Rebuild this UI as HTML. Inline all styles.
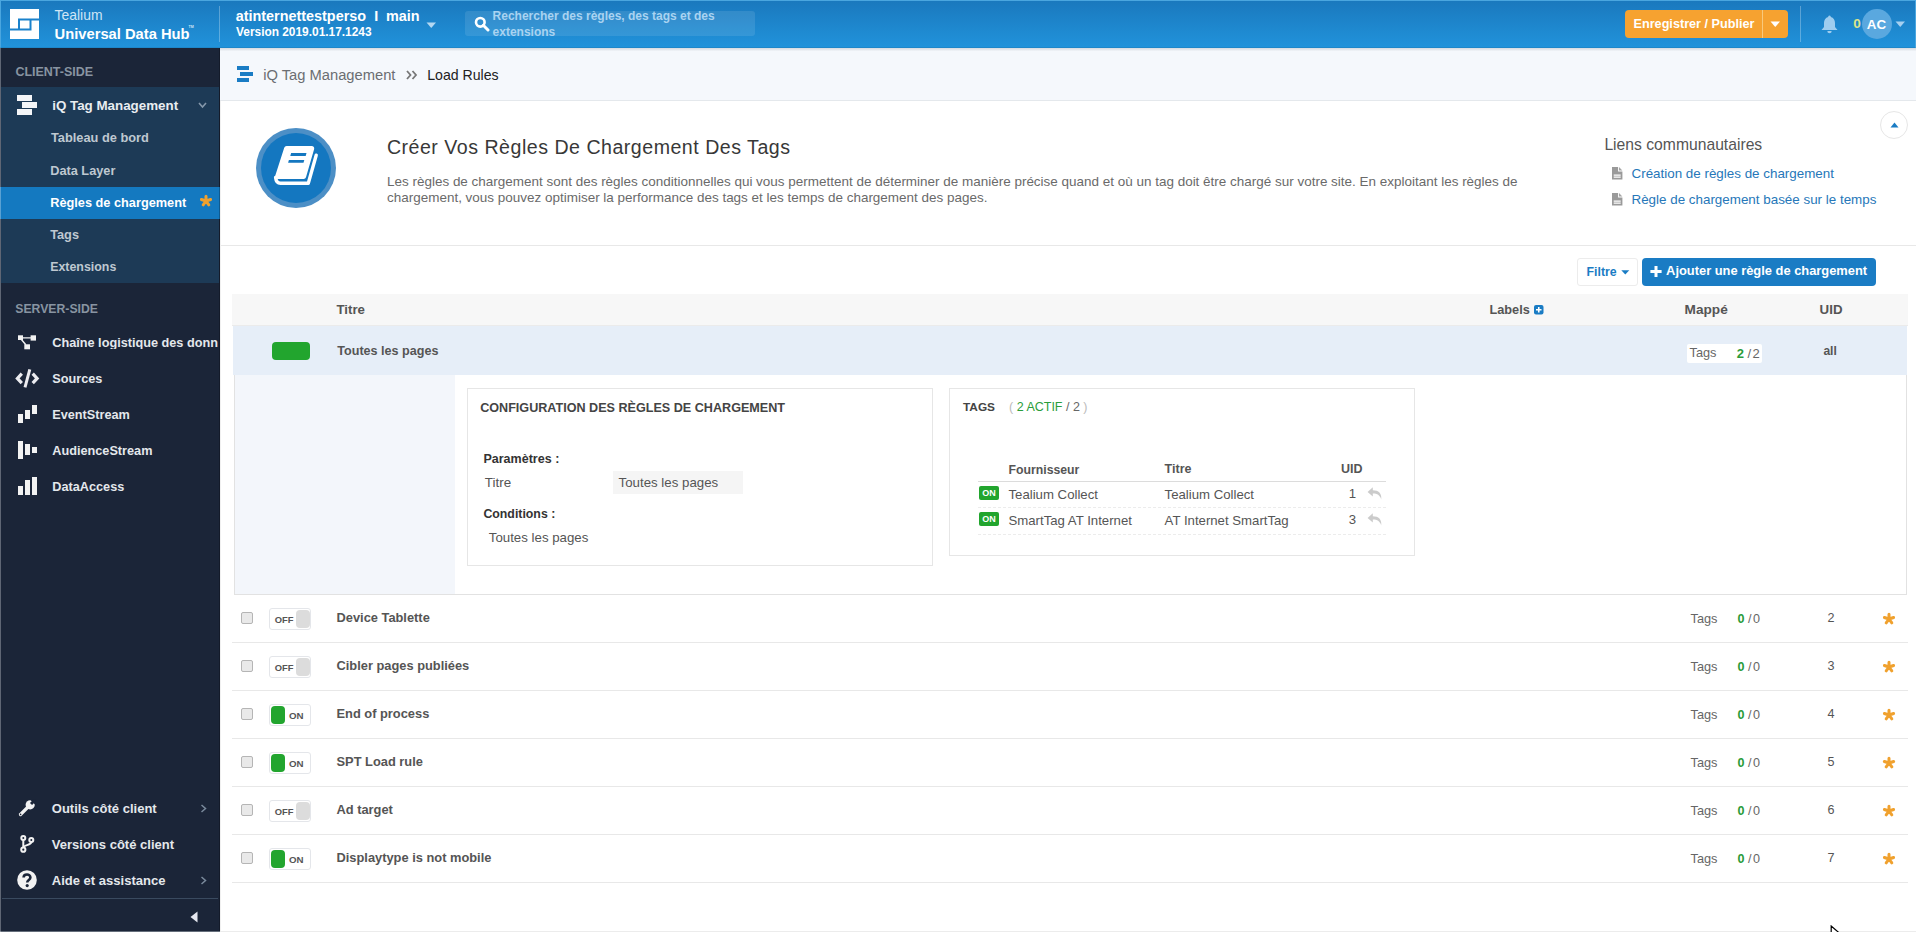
<!DOCTYPE html>
<html><head><meta charset="utf-8"><style>
html,body{margin:0;padding:0;}
body{width:1916px;height:932px;position:relative;overflow:hidden;background:#fff;font-family:"Liberation Sans",sans-serif;}
body>div,body>svg{position:absolute;}
.t{white-space:nowrap;line-height:1;}
</style></head><body>
<div style="left:0px;top:0px;width:1916px;height:48px;background:linear-gradient(#1a78bd,#2193db);"></div>
<div style="left:0px;top:0px;width:1916px;height:1px;background:#4aa6df;"></div>
<div style="left:0px;top:0px;width:1px;height:48px;background:#4aa6df;"></div>
<div style="left:1915px;top:0px;width:1px;height:48px;background:#4aa6df;"></div>
<div style="left:0px;top:47px;width:1916px;height:1px;background:rgba(0,0,0,0.08);"></div>
<svg style="position:absolute;left:10px;top:9px" width="30" height="31" viewBox="0 0 30 31"><rect x="0" y="0" width="29" height="30" fill="#fff"/><path d="M8 10.5 H29 M9 9.5 V20 M0 20.5 H21.5 M20.5 11 V21" stroke="#1a82cc" stroke-width="2" fill="none"/></svg>
<div class="t" style="left:54.6px;top:8.53px;font-size:13.9px;color:#cfe6f6;font-weight:normal;">Tealium</div>
<div class="t" style="left:54.6px;top:26.84px;font-size:14.72px;color:#fff;font-weight:bold;">Universal Data Hub</div>
<div class="t" style="left:188.6px;top:26.05px;font-size:3.6px;color:#cfe6f6;font-weight:bold;">TM</div>
<div style="left:219px;top:6px;width:1px;height:36px;background:rgba(255,255,255,0.28);"></div>
<div class="t" style="left:235.7px;top:9.01px;font-size:14.4px;color:#fff;font-weight:bold;">atinternettestperso</div>
<div class="t" style="left:374.2px;top:9.01px;font-size:14.4px;color:#fff;font-weight:bold;">I</div>
<div class="t" style="left:386px;top:9.01px;font-size:14.4px;color:#fff;font-weight:bold;">main</div>
<div class="t" style="left:236px;top:27.03px;font-size:11.9px;color:#fff;font-weight:bold;">Version 2019.01.17.1243</div>
<svg style="position:absolute;left:426px;top:22px" width="11" height="7"><path d="M0.5 0.5 L10 0.5 L5.25 6 Z" fill="#b3d8f2"/></svg>
<div style="left:465px;top:11px;width:290px;height:25px;background:rgba(255,255,255,0.10);border-radius:3px;"></div>
<svg style="position:absolute;left:474px;top:16px" width="16" height="16" viewBox="0 0 16 16"><circle cx="6.3" cy="6.3" r="4.3" stroke="#fff" stroke-width="2.6" fill="none"/><path d="M9.3 9.3 L14 14" stroke="#fff" stroke-width="3" stroke-linecap="round"/></svg>
<div class="t" style="left:492.6px;top:10.34px;font-size:12px;color:#a9d3f1;font-weight:bold;">Rechercher des règles, des tags et des</div>
<div class="t" style="left:492.6px;top:25.74px;font-size:12px;color:#a9d3f1;font-weight:bold;">extensions</div>
<div style="left:1625px;top:10px;width:163px;height:28px;background:#f6a230;border-radius:4px;"></div>
<div style="left:1762px;top:10px;width:1px;height:28px;background:#f9c97c;"></div>
<div class="t" style="left:1633.5px;top:17.78px;font-size:12.66px;color:#fff;font-weight:bold;">Enregistrer / Publier</div>
<svg style="position:absolute;left:1770px;top:21px" width="11" height="7"><path d="M0.5 0.5 L10 0.5 L5.25 6 Z" fill="#fff"/></svg>
<div style="left:1800px;top:6px;width:1px;height:36px;background:rgba(255,255,255,0.28);"></div>
<svg style="position:absolute;left:1820px;top:15px" width="19" height="19" viewBox="0 0 19 19"><path d="M9.5 0.5 C10.5 0.5 10.8 1.3 10.8 2 C13.6 2.7 15 5 15 8 L15 12 L17.5 15 L1.5 15 L4 12 L4 8 C4 5 5.4 2.7 8.2 2 C8.2 1.3 8.5 0.5 9.5 0.5 Z" fill="#9fcdef"/><path d="M7.3 16 A2.2 2.2 0 0 0 11.7 16 Z" fill="#9fcdef"/></svg>
<div class="t" style="left:1853.2px;top:16.99px;font-size:13.6px;color:#dbe48a;font-weight:bold;">0</div>
<div style="left:1862px;top:9px;width:30px;height:30px;border-radius:50%;background:#5aa8df;"></div>
<div class="t" style="left:1866.8px;top:17.76px;font-size:13.4px;color:#fff;font-weight:bold;">AC</div>
<svg style="position:absolute;left:1895px;top:21px" width="11" height="7"><path d="M0.5 0.5 L10 0.5 L5.25 6 Z" fill="#a6d0f0"/></svg>
<div style="left:0px;top:48px;width:220px;height:884px;background:#1b2538;"></div>
<div class="t" style="left:15.4px;top:66.14px;font-size:12.47px;color:#8894a1;font-weight:bold;">CLIENT-SIDE</div>
<div style="left:1px;top:87px;width:218px;height:196px;background:#1d3a56;"></div>
<div style="left:17px;top:95.2px;width:15px;height:5.6px;background:#f4f6f8;"></div>
<div style="left:22px;top:102px;width:14.6px;height:5.9px;background:#f4f6f8;"></div>
<div style="left:17px;top:109.2px;width:15px;height:5.6px;background:#f4f6f8;"></div>
<div class="t" style="left:52.2px;top:99.38px;font-size:13.37px;color:#e9edf1;font-weight:bold;">iQ Tag Management</div>
<svg style="position:absolute;left:198px;top:102px" width="10" height="7"><path d="M1 1 L4.5 5 L8 1" stroke="#8597aa" stroke-width="1.6" fill="none"/></svg>
<div style="left:0px;top:187px;width:220px;height:32px;background:#1479c0;"></div>
<div class="t" style="left:51px;top:132.46px;font-size:12.8px;color:#bfc8d1;font-weight:bold;">Tableau de bord</div>
<div class="t" style="left:50.2px;top:165.01px;font-size:12.75px;color:#bfc8d1;font-weight:bold;">Data Layer</div>
<div class="t" style="left:50.2px;top:196.91px;font-size:12.75px;color:#ffffff;font-weight:bold;">Règles de chargement</div>
<div class="t" style="left:50.2px;top:228.61px;font-size:12.75px;color:#bfc8d1;font-weight:bold;">Tags</div>
<div class="t" style="left:50.2px;top:260.80px;font-size:12.4px;color:#bfc8d1;font-weight:bold;">Extensions</div>
<svg style="position:absolute;left:199px;top:194px" width="14" height="14" viewBox="0 0 14 14"><g stroke="#f0a12e" stroke-width="3" stroke-linecap="round"><path d="M7 7 L7 2.2 M7 7 L11.6 5.5 M7 7 L9.8 10.9 M7 7 L4.2 10.9 M7 7 L2.4 5.5"/></g></svg>
<div class="t" style="left:15.3px;top:303.35px;font-size:12.23px;color:#8894a1;font-weight:bold;">SERVER-SIDE</div>
<div class="t" style="left:52.3px;top:336.55px;font-size:12.7px;color:#e4e8ec;font-weight:bold;width:166px;overflow:hidden;">Chaîne logistique des données</div>
<div class="t" style="left:52.3px;top:372.55px;font-size:12.7px;color:#e4e8ec;font-weight:bold;width:166px;overflow:hidden;">Sources</div>
<div class="t" style="left:52.3px;top:408.55px;font-size:12.7px;color:#e4e8ec;font-weight:bold;width:166px;overflow:hidden;">EventStream</div>
<div class="t" style="left:52.3px;top:444.65px;font-size:12.7px;color:#e4e8ec;font-weight:bold;width:166px;overflow:hidden;">AudienceStream</div>
<div class="t" style="left:52.3px;top:480.65px;font-size:12.7px;color:#e4e8ec;font-weight:bold;width:166px;overflow:hidden;">DataAccess</div>
<svg style="position:absolute;left:17px;top:334px" width="21" height="17" viewBox="0 0 21 17"><rect x="1" y="1.3" width="5" height="4.7" fill="#f2f2f2"/><rect x="13.6" y="1.3" width="5.4" height="5.3" fill="#f2f2f2"/><rect x="7.3" y="10.3" width="5.7" height="5" fill="#f2f2f2"/><path d="M5 3.9 H14 M4.2 5.2 L8.8 10.8" stroke="#f2f2f2" stroke-width="1.4"/></svg>
<svg style="position:absolute;left:15px;top:369px" width="25" height="19" viewBox="0 0 25 19"><path d="M6.8 4.6 L2.4 9.4 L6.8 14.2 M17.7 4.6 L22.1 9.4 L17.7 14.2" stroke="#ececf0" stroke-width="3.2" fill="none"/><path d="M14.8 0.4 L10 18.3" stroke="#ececf0" stroke-width="3"/></svg>
<div style="left:18px;top:414px;width:4.5px;height:9px;background:#f2f2f2;"></div>
<div style="left:25px;top:409.5px;width:5px;height:9px;background:#f2f2f2;"></div>
<div style="left:31.5px;top:405px;width:5px;height:9px;background:#f2f2f2;"></div>
<div style="left:17.6px;top:441px;width:5px;height:18px;background:#f2f2f2;"></div>
<div style="left:24.8px;top:444.3px;width:5px;height:11.2px;background:#f2f2f2;"></div>
<div style="left:31.5px;top:446.5px;width:5px;height:6.8px;background:#f2f2f2;"></div>
<div style="left:18px;top:486px;width:4.5px;height:9px;background:#f2f2f2;"></div>
<div style="left:24.8px;top:480.3px;width:5px;height:14.7px;background:#f2f2f2;"></div>
<div style="left:31.5px;top:476.5px;width:5px;height:18.5px;background:#f2f2f2;"></div>
<div class="t" style="left:51.8px;top:802.27px;font-size:13.03px;color:#e4e8ec;font-weight:bold;">Outils côté client</div>
<svg style="position:absolute;left:200px;top:803.8px" width="8" height="10"><path d="M1.5 1 L5.5 4.5 L1.5 8" stroke="#7a8a9c" stroke-width="1.5" fill="none"/></svg>
<div class="t" style="left:51.8px;top:838.07px;font-size:13.03px;color:#e4e8ec;font-weight:bold;">Versions côté client</div>
<div class="t" style="left:51.8px;top:874.17px;font-size:13.03px;color:#e4e8ec;font-weight:bold;">Aide et assistance</div>
<svg style="position:absolute;left:200px;top:875.7px" width="8" height="10"><path d="M1.5 1 L5.5 4.5 L1.5 8" stroke="#7a8a9c" stroke-width="1.5" fill="none"/></svg>
<svg style="position:absolute;left:18px;top:799px" width="18" height="18" viewBox="0 0 18 18"><path d="M2.5 15.5 L10 8" stroke="#f2f2f2" stroke-width="3.2" stroke-linecap="round"/><circle cx="12.2" cy="5.8" r="4.6" fill="#f2f2f2"/><path d="M12.5 1 L17.5 1 L17.5 6 Z" fill="#1b2538"/><path d="M13 5 L17.4 0.6" stroke="#1b2538" stroke-width="3"/><circle cx="2.6" cy="15.4" r="0.8" fill="#1b2538"/></svg>
<svg style="position:absolute;left:19px;top:834px" width="16" height="20" viewBox="0 0 16 20"><g stroke="#f2f2f2" stroke-width="2" fill="none"><circle cx="4.3" cy="3.9" r="2"/><circle cx="4.3" cy="15.7" r="2.1"/><circle cx="12.3" cy="6" r="2"/><path d="M4.3 5.9 V13.6"/><path d="M12.3 8 C12.3 11.5 4.5 10.8 4.4 13.6"/></g></svg>
<svg style="position:absolute;left:17px;top:870px" width="20" height="20" viewBox="0 0 20 20"><circle cx="10" cy="10" r="9.8" fill="#f2f2f2"/><path d="M6.6 7.6 C6.6 3.6 13.4 3.6 13.4 7.4 C13.4 9.8 10.2 10 10.2 12.4" stroke="#1b2538" stroke-width="2.6" fill="none"/><circle cx="10.2" cy="15.6" r="1.6" fill="#1b2538"/></svg>
<div style="left:2px;top:898px;width:216px;height:1px;background:#3a4a5f;"></div>
<svg style="position:absolute;left:190px;top:911px" width="8" height="12"><path d="M7.5 0.5 L7.5 11.5 L0.5 6 Z" fill="#e6e8f0"/></svg>
<div style="left:0px;top:931px;width:220px;height:1px;background:#656e7b;"></div>
<div style="left:219px;top:48px;width:1px;height:883px;background:rgba(0,0,0,0.25);"></div>
<div style="left:0px;top:48px;width:1px;height:884px;background:rgba(255,255,255,0.3);"></div>
<div style="left:220px;top:48px;width:1696px;height:52px;background:#f5f8fc;"></div>
<div style="left:220px;top:100px;width:1696px;height:1px;background:#e4e8ec;"></div>
<div style="left:220px;top:48px;width:1696px;height:3px;background:linear-gradient(rgba(60,70,85,0.17),rgba(60,70,85,0.02));"></div>
<div style="left:237px;top:66px;width:12px;height:4.2px;background:#1a7cc4;"></div>
<div style="left:240px;top:72px;width:13px;height:4.2px;background:#1a7cc4;"></div>
<div style="left:237px;top:77.6px;width:12px;height:4.2px;background:#1a7cc4;"></div>
<div class="t" style="left:263.2px;top:67.83px;font-size:14.73px;color:#6b6e72;font-weight:normal;">iQ Tag Management</div>
<svg style="position:absolute;left:406px;top:70px" width="12" height="10" viewBox="0 0 12 10"><path d="M1 1 L4.5 5 L1 9 M6.5 1 L10 5 L6.5 9" stroke="#777" stroke-width="1.8" fill="none"/></svg>
<div class="t" style="left:427.2px;top:68.34px;font-size:14.13px;color:#222;font-weight:normal;">Load Rules</div>
<div style="left:220px;top:245px;width:1696px;height:1px;background:#e8e8e8;"></div>
<div style="left:220px;top:101px;width:1px;height:830px;background:#f0f0f0;"></div>
<div style="left:256px;top:128px;width:80px;height:80px;border-radius:50%;background:#4c8fc6;"></div>
<div style="left:261px;top:133px;width:70px;height:70px;border-radius:50%;background:#1477c0;"></div>
<svg style="position:absolute;left:268px;top:140px" width="56" height="52" viewBox="0 0 56 52"><path d="M18.6 8.6 L43.7 8.6 L35.6 36.5 L9.6 36.5 Z" fill="#fff" stroke="#fff" stroke-width="5" stroke-linejoin="round"/><path d="M7.6 37.5 Q8.2 43.3 12.5 43.3 L40.3 43.3 L48.2 15.2" fill="none" stroke="#fff" stroke-width="3.4" stroke-linejoin="round" stroke-linecap="round"/><path d="M23.1 13.1 L38.5 13.1 L37.7 15.9 L22.3 15.9 Z M20.9 20.1 L36.3 20.1 L35.5 22.8 L20.1 22.8 Z" fill="#1477c0"/></svg>
<div class="t" style="left:386.9px;top:138.11px;font-size:19.6px;color:#383838;font-weight:normal;letter-spacing:0.5px;">Créer Vos Règles De Chargement Des Tags</div>
<div class="t" style="left:387px;top:174.90px;font-size:13.47px;color:#6a6a6a;font-weight:normal;">Les règles de chargement sont des règles conditionnelles qui vous permettent de déterminer de manière précise quand et où un tag doit être chargé sur votre site. En exploitant les règles de</div>
<div class="t" style="left:387px;top:190.80px;font-size:13.47px;color:#6a6a6a;font-weight:normal;">chargement, vous pouvez optimiser la performance des tags et les temps de chargement des pages.</div>
<div class="t" style="left:1604.4px;top:136.51px;font-size:15.7px;color:#555;font-weight:normal;">Liens communautaires</div>
<svg style="position:absolute;left:1612px;top:167.29999999999998px" width="11" height="13" viewBox="0 0 11 13"><path d="M0 0 H6.1 V4.5 H10.4 V12.5 H0 Z" fill="#9a9a9a"/><path d="M7 0 L10.4 3.6 L7 3.6 Z" fill="#a5a5a5"/><path d="M1.7 8.2 H8.7 M1.7 10.2 H8.7" stroke="#fff" stroke-width="1.3"/></svg>
<div class="t" style="left:1631.5px;top:166.86px;font-size:13.4px;color:#2677b9;font-weight:normal;">Création de règles de chargement</div>
<svg style="position:absolute;left:1612px;top:193.2px" width="11" height="13" viewBox="0 0 11 13"><path d="M0 0 H6.1 V4.5 H10.4 V12.5 H0 Z" fill="#9a9a9a"/><path d="M7 0 L10.4 3.6 L7 3.6 Z" fill="#a5a5a5"/><path d="M1.7 8.2 H8.7 M1.7 10.2 H8.7" stroke="#fff" stroke-width="1.3"/></svg>
<div class="t" style="left:1631.5px;top:192.76px;font-size:13.4px;color:#2677b9;font-weight:normal;">Règle de chargement basée sur le temps</div>
<div style="left:1880px;top:111px;width:26px;height:26px;border-radius:50%;border:1px solid #e6e6e6;background:#fff;"></div>
<svg style="position:absolute;left:1890px;top:122px" width="9" height="6"><path d="M0.5 5.5 L8.5 5.5 L4.5 0.5 Z" fill="#1a7cc4"/></svg>
<div style="left:1577px;top:258px;width:59px;height:26px;border:1px solid #ececec;border-radius:3px;background:#fff;"></div>
<div class="t" style="left:1586.6px;top:265.78px;font-size:12.31px;color:#1a7cc4;font-weight:bold;">Filtre</div>
<svg style="position:absolute;left:1620.5px;top:269.8px" width="10" height="6"><path d="M0.3 0.3 L8.3 0.3 L4.3 4.6 Z" fill="#1a7cc4"/></svg>
<div style="left:1642px;top:258px;width:234px;height:28px;background:#1a7cc4;border-radius:4px;"></div>
<svg style="position:absolute;left:1650px;top:266px" width="12" height="12"><path d="M6 0 V11 M0.4 5.5 H11.6" stroke="#fff" stroke-width="3"/></svg>
<div class="t" style="left:1666.1px;top:265.30px;font-size:12.88px;color:#fff;font-weight:bold;">Ajouter une règle de chargement</div>
<div style="left:232px;top:294px;width:1676px;height:31px;background:#f7f7f7;"></div>
<div style="left:232px;top:325px;width:1676px;height:1px;background:#ebebeb;"></div>
<div class="t" style="left:336.5px;top:303.11px;font-size:13.22px;color:#555;font-weight:bold;">Titre</div>
<div class="t" style="left:1489.4px;top:303.51px;font-size:12.75px;color:#555;font-weight:bold;">Labels</div>
<svg style="position:absolute;left:1534px;top:305px" width="10" height="10"><rect x="0" y="0" width="9.5" height="9.5" rx="2" fill="#1a7cc4"/><path d="M4.75 2 V7.5 M2 4.75 H7.5" stroke="#fff" stroke-width="1.6"/></svg>
<div class="t" style="left:1684.6px;top:303.15px;font-size:13.64px;color:#555;font-weight:bold;">Mappé</div>
<div class="t" style="left:1819.6px;top:303.44px;font-size:13.3px;color:#555;font-weight:bold;">UID</div>
<div style="left:233px;top:326px;width:1674px;height:49px;background:#e6eef8;"></div>
<div style="left:272px;top:342px;width:38px;height:18px;background:#22a52e;border-radius:4px;"></div>
<div class="t" style="left:337.3px;top:345.04px;font-size:12.59px;color:#555;font-weight:bold;">Toutes les pages</div>
<div style="left:1687px;top:344px;width:75px;height:19px;background:#fff;border-radius:2px;"></div>
<div class="t" style="left:1689.5px;top:346.98px;font-size:12.78px;color:#666;font-weight:normal;">Tags</div>
<div class="t" style="left:1736.7px;top:346.80px;font-size:13px;color:#2a9b3a;font-weight:bold;">2</div>
<div class="t" style="left:1747.4px;top:346.80px;font-size:13px;color:#666;font-weight:normal;">/</div>
<div class="t" style="left:1752.5px;top:346.80px;font-size:13px;color:#666;font-weight:normal;">2</div>
<div class="t" style="left:1823.4px;top:344.90px;font-size:12.05px;color:#555;font-weight:bold;">all</div>
<div style="left:234px;top:375px;width:1671px;height:219px;border-left:1px solid #e2e2e2;border-right:1px solid #e2e2e2;border-bottom:1px solid #e2e2e2;background:#fff;"></div>
<div style="left:235px;top:375px;width:220px;height:219px;background:#f3f6fb;"></div>
<div style="left:467px;top:388px;width:464px;height:176px;border:1px solid #e6e6e6;"></div>
<div class="t" style="left:480.2px;top:401.63px;font-size:12.6px;color:#444;font-weight:bold;">CONFIGURATION DES RÈGLES DE CHARGEMENT</div>
<div class="t" style="left:483.4px;top:452.68px;font-size:12.54px;color:#333;font-weight:bold;">Paramètres :</div>
<div class="t" style="left:484.8px;top:475.56px;font-size:13.4px;color:#555;font-weight:normal;">Titre</div>
<div style="left:613px;top:471px;width:130px;height:23px;background:#f5f5f5;"></div>
<div class="t" style="left:618.6px;top:475.67px;font-size:13.27px;color:#555;font-weight:normal;">Toutes les pages</div>
<div class="t" style="left:483.4px;top:507.96px;font-size:12.33px;color:#333;font-weight:bold;">Conditions :</div>
<div class="t" style="left:488.8px;top:530.77px;font-size:13.27px;color:#555;font-weight:normal;">Toutes les pages</div>
<div style="left:949px;top:388px;width:464px;height:166px;border:1px solid #e6e6e6;"></div>
<div class="t" style="left:963px;top:401.68px;font-size:11.84px;color:#444;font-weight:bold;">TAGS</div>
<div class="t" style="left:1009px;top:401.12px;font-size:12.5px;color:#666;font-weight:normal;"><span style="color:#bbb">(</span> <span style="color:#2a9d3a">2 ACTIF</span> / 2 <span style="color:#bbb">)</span></div>
<div class="t" style="left:1008.5px;top:463.51px;font-size:12.27px;color:#555;font-weight:bold;">Fournisseur</div>
<div class="t" style="left:1164.6px;top:463.32px;font-size:12.5px;color:#555;font-weight:bold;">Titre</div>
<div class="t" style="left:1341px;top:463.32px;font-size:12.5px;color:#555;font-weight:bold;">UID</div>
<div style="left:978px;top:481px;width:408px;height:1px;background:#dcdcdc;"></div>
<div style="left:979px;top:486.09999999999997px;width:20px;height:13.6px;background:#22a52e;border-radius:2px;"></div>
<div class="t" style="left:982.3px;top:488.88px;font-size:9px;color:#fff;font-weight:bold;">ON</div>
<div class="t" style="left:1008.5px;top:487.53px;font-size:13.2px;color:#555;font-weight:normal;">Tealium Collect</div>
<div class="t" style="left:1164.6px;top:487.53px;font-size:13.2px;color:#555;font-weight:normal;">Tealium Collect</div>
<div class="t" style="left:1348.8px;top:486.73px;font-size:13.2px;color:#555;font-weight:normal;">1</div>
<svg style="position:absolute;left:1366.5px;top:486.7px" width="16" height="13" viewBox="0 0 16 13"><path d="M5.8 0.3 L0.6 5 L5.8 9.6 V6.6 C9.5 6.4 13 8 14.2 12.4 C15 6.5 11.5 3.3 5.8 3.3 Z" fill="#cbcbcb"/></svg>
<div style="left:978px;top:507.2px;width:408px;height:0px;border-top:1px dashed #ececec;"></div>
<div style="left:979px;top:512.4px;width:20px;height:13.6px;background:#22a52e;border-radius:2px;"></div>
<div class="t" style="left:982.3px;top:515.18px;font-size:9px;color:#fff;font-weight:bold;">ON</div>
<div class="t" style="left:1008.5px;top:513.83px;font-size:13.2px;color:#555;font-weight:normal;">SmartTag AT Internet</div>
<div class="t" style="left:1164.6px;top:513.83px;font-size:13.2px;color:#555;font-weight:normal;">AT Internet SmartTag</div>
<div class="t" style="left:1348.8px;top:513.03px;font-size:13.2px;color:#555;font-weight:normal;">3</div>
<svg style="position:absolute;left:1366.5px;top:513.0px" width="16" height="13" viewBox="0 0 16 13"><path d="M5.8 0.3 L0.6 5 L5.8 9.6 V6.6 C9.5 6.4 13 8 14.2 12.4 C15 6.5 11.5 3.3 5.8 3.3 Z" fill="#cbcbcb"/></svg>
<div style="left:978px;top:533.5px;width:408px;height:0px;border-top:1px dashed #ececec;"></div>
<div style="left:232px;top:642px;width:1676px;height:1px;background:#e8e8e8;"></div>
<div style="left:241px;top:612px;width:10px;height:10px;border:1px solid #b5b5b5;border-radius:2px;background:#e9e9e9;"></div>
<div style="left:269px;top:608.4px;width:40px;height:19.6px;border:1px solid #e4e6ea;border-radius:3px;background:#fff;"></div>
<div style="left:296.2px;top:610.3px;width:14px;height:17.3px;background:#dcdcdc;border-radius:4px;"></div>
<div class="t" style="left:274.7px;top:614.84px;font-size:9.4px;color:#555;font-weight:bold;">OFF</div>
<div class="t" style="left:336.5px;top:612.02px;font-size:12.85px;color:#555;font-weight:bold;">Device Tablette</div>
<div class="t" style="left:1690.5px;top:613.28px;font-size:12.78px;color:#666;font-weight:normal;">Tags</div>
<div class="t" style="left:1737.4px;top:613.43px;font-size:12.6px;color:#2a9b3a;font-weight:bold;">0</div>
<div class="t" style="left:1748px;top:613.43px;font-size:12.6px;color:#666;font-weight:normal;">/</div>
<div class="t" style="left:1753px;top:613.43px;font-size:12.6px;color:#666;font-weight:normal;">0</div>
<div class="t" style="left:1827.5px;top:612.03px;font-size:12.6px;color:#555;font-weight:normal;">2</div>
<svg style="position:absolute;left:1882px;top:611.5px" width="14" height="14" viewBox="0 0 14 14"><g stroke="#f0a12e" stroke-width="3" stroke-linecap="round"><path d="M7 7 L7 2.2 M7 7 L11.6 5.5 M7 7 L9.8 10.9 M7 7 L4.2 10.9 M7 7 L2.4 5.5"/></g></svg>
<div style="left:232px;top:690px;width:1676px;height:1px;background:#e8e8e8;"></div>
<div style="left:241px;top:660px;width:10px;height:10px;border:1px solid #b5b5b5;border-radius:2px;background:#e9e9e9;"></div>
<div style="left:269px;top:656.4px;width:40px;height:19.6px;border:1px solid #e4e6ea;border-radius:3px;background:#fff;"></div>
<div style="left:296.2px;top:658.3px;width:14px;height:17.3px;background:#dcdcdc;border-radius:4px;"></div>
<div class="t" style="left:274.7px;top:662.84px;font-size:9.4px;color:#555;font-weight:bold;">OFF</div>
<div class="t" style="left:336.5px;top:660.02px;font-size:12.85px;color:#555;font-weight:bold;">Cibler pages publiées</div>
<div class="t" style="left:1690.5px;top:661.28px;font-size:12.78px;color:#666;font-weight:normal;">Tags</div>
<div class="t" style="left:1737.4px;top:661.43px;font-size:12.6px;color:#2a9b3a;font-weight:bold;">0</div>
<div class="t" style="left:1748px;top:661.43px;font-size:12.6px;color:#666;font-weight:normal;">/</div>
<div class="t" style="left:1753px;top:661.43px;font-size:12.6px;color:#666;font-weight:normal;">0</div>
<div class="t" style="left:1827.5px;top:660.03px;font-size:12.6px;color:#555;font-weight:normal;">3</div>
<svg style="position:absolute;left:1882px;top:659.5px" width="14" height="14" viewBox="0 0 14 14"><g stroke="#f0a12e" stroke-width="3" stroke-linecap="round"><path d="M7 7 L7 2.2 M7 7 L11.6 5.5 M7 7 L9.8 10.9 M7 7 L4.2 10.9 M7 7 L2.4 5.5"/></g></svg>
<div style="left:232px;top:738px;width:1676px;height:1px;background:#e8e8e8;"></div>
<div style="left:241px;top:708px;width:10px;height:10px;border:1px solid #b5b5b5;border-radius:2px;background:#e9e9e9;"></div>
<div style="left:269px;top:704.4px;width:40px;height:19.6px;border:1px solid #e4e6ea;border-radius:3px;background:#fff;"></div>
<div style="left:271px;top:706.3px;width:13.6px;height:17.3px;background:#22a52e;border-radius:4px;"></div>
<div class="t" style="left:289px;top:710.66px;font-size:9.73px;color:#555;font-weight:bold;">ON</div>
<div class="t" style="left:336.5px;top:708.02px;font-size:12.85px;color:#555;font-weight:bold;">End of process</div>
<div class="t" style="left:1690.5px;top:709.28px;font-size:12.78px;color:#666;font-weight:normal;">Tags</div>
<div class="t" style="left:1737.4px;top:709.43px;font-size:12.6px;color:#2a9b3a;font-weight:bold;">0</div>
<div class="t" style="left:1748px;top:709.43px;font-size:12.6px;color:#666;font-weight:normal;">/</div>
<div class="t" style="left:1753px;top:709.43px;font-size:12.6px;color:#666;font-weight:normal;">0</div>
<div class="t" style="left:1827.5px;top:708.03px;font-size:12.6px;color:#555;font-weight:normal;">4</div>
<svg style="position:absolute;left:1882px;top:707.5px" width="14" height="14" viewBox="0 0 14 14"><g stroke="#f0a12e" stroke-width="3" stroke-linecap="round"><path d="M7 7 L7 2.2 M7 7 L11.6 5.5 M7 7 L9.8 10.9 M7 7 L4.2 10.9 M7 7 L2.4 5.5"/></g></svg>
<div style="left:232px;top:786px;width:1676px;height:1px;background:#e8e8e8;"></div>
<div style="left:241px;top:756px;width:10px;height:10px;border:1px solid #b5b5b5;border-radius:2px;background:#e9e9e9;"></div>
<div style="left:269px;top:752.4px;width:40px;height:19.6px;border:1px solid #e4e6ea;border-radius:3px;background:#fff;"></div>
<div style="left:271px;top:754.3px;width:13.6px;height:17.3px;background:#22a52e;border-radius:4px;"></div>
<div class="t" style="left:289px;top:758.66px;font-size:9.73px;color:#555;font-weight:bold;">ON</div>
<div class="t" style="left:336.5px;top:756.02px;font-size:12.85px;color:#555;font-weight:bold;">SPT Load rule</div>
<div class="t" style="left:1690.5px;top:757.28px;font-size:12.78px;color:#666;font-weight:normal;">Tags</div>
<div class="t" style="left:1737.4px;top:757.43px;font-size:12.6px;color:#2a9b3a;font-weight:bold;">0</div>
<div class="t" style="left:1748px;top:757.43px;font-size:12.6px;color:#666;font-weight:normal;">/</div>
<div class="t" style="left:1753px;top:757.43px;font-size:12.6px;color:#666;font-weight:normal;">0</div>
<div class="t" style="left:1827.5px;top:756.03px;font-size:12.6px;color:#555;font-weight:normal;">5</div>
<svg style="position:absolute;left:1882px;top:755.5px" width="14" height="14" viewBox="0 0 14 14"><g stroke="#f0a12e" stroke-width="3" stroke-linecap="round"><path d="M7 7 L7 2.2 M7 7 L11.6 5.5 M7 7 L9.8 10.9 M7 7 L4.2 10.9 M7 7 L2.4 5.5"/></g></svg>
<div style="left:232px;top:834px;width:1676px;height:1px;background:#e8e8e8;"></div>
<div style="left:241px;top:804px;width:10px;height:10px;border:1px solid #b5b5b5;border-radius:2px;background:#e9e9e9;"></div>
<div style="left:269px;top:800.4px;width:40px;height:19.6px;border:1px solid #e4e6ea;border-radius:3px;background:#fff;"></div>
<div style="left:296.2px;top:802.3px;width:14px;height:17.3px;background:#dcdcdc;border-radius:4px;"></div>
<div class="t" style="left:274.7px;top:806.84px;font-size:9.4px;color:#555;font-weight:bold;">OFF</div>
<div class="t" style="left:336.5px;top:804.02px;font-size:12.85px;color:#555;font-weight:bold;">Ad target</div>
<div class="t" style="left:1690.5px;top:805.28px;font-size:12.78px;color:#666;font-weight:normal;">Tags</div>
<div class="t" style="left:1737.4px;top:805.43px;font-size:12.6px;color:#2a9b3a;font-weight:bold;">0</div>
<div class="t" style="left:1748px;top:805.43px;font-size:12.6px;color:#666;font-weight:normal;">/</div>
<div class="t" style="left:1753px;top:805.43px;font-size:12.6px;color:#666;font-weight:normal;">0</div>
<div class="t" style="left:1827.5px;top:804.03px;font-size:12.6px;color:#555;font-weight:normal;">6</div>
<svg style="position:absolute;left:1882px;top:803.5px" width="14" height="14" viewBox="0 0 14 14"><g stroke="#f0a12e" stroke-width="3" stroke-linecap="round"><path d="M7 7 L7 2.2 M7 7 L11.6 5.5 M7 7 L9.8 10.9 M7 7 L4.2 10.9 M7 7 L2.4 5.5"/></g></svg>
<div style="left:232px;top:882px;width:1676px;height:1px;background:#e8e8e8;"></div>
<div style="left:241px;top:852px;width:10px;height:10px;border:1px solid #b5b5b5;border-radius:2px;background:#e9e9e9;"></div>
<div style="left:269px;top:848.4px;width:40px;height:19.6px;border:1px solid #e4e6ea;border-radius:3px;background:#fff;"></div>
<div style="left:271px;top:850.3px;width:13.6px;height:17.3px;background:#22a52e;border-radius:4px;"></div>
<div class="t" style="left:289px;top:854.66px;font-size:9.73px;color:#555;font-weight:bold;">ON</div>
<div class="t" style="left:336.5px;top:852.02px;font-size:12.85px;color:#555;font-weight:bold;">Displaytype is not mobile</div>
<div class="t" style="left:1690.5px;top:853.28px;font-size:12.78px;color:#666;font-weight:normal;">Tags</div>
<div class="t" style="left:1737.4px;top:853.43px;font-size:12.6px;color:#2a9b3a;font-weight:bold;">0</div>
<div class="t" style="left:1748px;top:853.43px;font-size:12.6px;color:#666;font-weight:normal;">/</div>
<div class="t" style="left:1753px;top:853.43px;font-size:12.6px;color:#666;font-weight:normal;">0</div>
<div class="t" style="left:1827.5px;top:852.03px;font-size:12.6px;color:#555;font-weight:normal;">7</div>
<svg style="position:absolute;left:1882px;top:851.5px" width="14" height="14" viewBox="0 0 14 14"><g stroke="#f0a12e" stroke-width="3" stroke-linecap="round"><path d="M7 7 L7 2.2 M7 7 L11.6 5.5 M7 7 L9.8 10.9 M7 7 L4.2 10.9 M7 7 L2.4 5.5"/></g></svg>
<div style="left:232px;top:594px;width:1676px;height:0px;"></div>
<div style="left:220px;top:931px;width:1696px;height:1px;background:#ececec;"></div>
<svg style="position:absolute;left:1830px;top:925px" width="12" height="7"><path d="M1.2 1 L1.2 14 L4.5 10.5 L7.5 16 L9.5 15 L6.8 9.5 L11 9.5 Z" fill="#fff" stroke="#000" stroke-width="1.2"/></svg>
</body></html>
